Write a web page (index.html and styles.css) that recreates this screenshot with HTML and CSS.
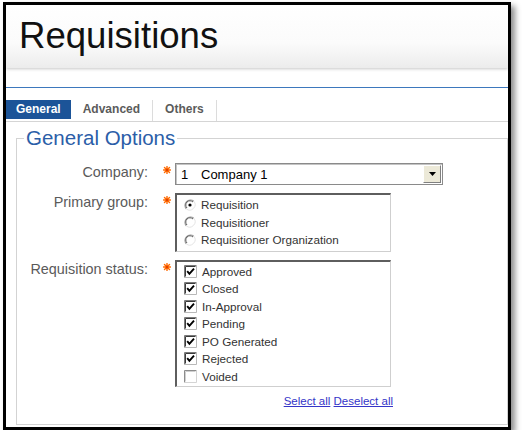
FILE: index.html
```html
<!DOCTYPE html>
<html>
<head>
<meta charset="utf-8">
<link rel="stylesheet" href="styles.css">
</head>
<body>
<div class="frame">
  <header class="page-header"><h1>Requisitions</h1></header>
  <div class="rule"></div>
  <nav class="tabs">
    <span class="tab active">General</span>
    <span class="tab">Advanced</span>
    <span class="tab">Others</span>
  </nav>
  <fieldset class="options">
    <legend>General Options</legend>

    <div class="row">
      <label class="lbl">Company:</label>
      <span class="req"><svg width="8" height="8" viewBox="0 0 8 8"><path d="M4 0.5V7.5M0.5 4H7.5M1.5 1.5L6.5 6.5M6.5 1.5L1.5 6.5" stroke="#ff6a00" stroke-width="1.4" stroke-linecap="round"/><circle cx="4" cy="4" r="1.2" fill="#e04000"/></svg></span>
      <div class="select">
        <span class="code">1</span><span class="value">Company 1</span>
        <span class="drop"><svg width="7" height="4" viewBox="0 0 7 4"><path d="M0 0H7L3.5 4Z" fill="#000"/></svg></span>
      </div>
    </div>

    <div class="row">
      <label class="lbl">Primary group:</label>
      <span class="req"><svg width="8" height="8" viewBox="0 0 8 8"><path d="M4 0.5V7.5M0.5 4H7.5M1.5 1.5L6.5 6.5M6.5 1.5L1.5 6.5" stroke="#ff6a00" stroke-width="1.4" stroke-linecap="round"/><circle cx="4" cy="4" r="1.2" fill="#e04000"/></svg></span>
      <div class="listbox radios">
        <div class="item"><svg class="radio" width="12" height="12" viewBox="0 0 12 12"><path d="M2.2 9.8A5.4 5.4 0 0 1 9.8 2.2" stroke="#9a9a9a" stroke-width="1.1" fill="none"/><path d="M3 9A4.2 4.2 0 0 1 9 3" stroke="#5a5a5a" stroke-width="1" fill="none"/><path d="M2.2 9.8A5.4 5.4 0 0 0 9.8 2.2" stroke="#e4e4e4" stroke-width="1" fill="none"/><circle cx="6" cy="6" r="1.6" fill="#000"/></svg><span>Requisition</span></div>
        <div class="item"><svg class="radio" width="12" height="12" viewBox="0 0 12 12"><path d="M2.2 9.8A5.4 5.4 0 0 1 9.8 2.2" stroke="#9a9a9a" stroke-width="1.1" fill="none"/><path d="M3 9A4.2 4.2 0 0 1 9 3" stroke="#5a5a5a" stroke-width="1" fill="none"/><path d="M2.2 9.8A5.4 5.4 0 0 0 9.8 2.2" stroke="#e4e4e4" stroke-width="1" fill="none"/></svg><span>Requisitioner</span></div>
        <div class="item"><svg class="radio" width="12" height="12" viewBox="0 0 12 12"><path d="M2.2 9.8A5.4 5.4 0 0 1 9.8 2.2" stroke="#9a9a9a" stroke-width="1.1" fill="none"/><path d="M3 9A4.2 4.2 0 0 1 9 3" stroke="#5a5a5a" stroke-width="1" fill="none"/><path d="M2.2 9.8A5.4 5.4 0 0 0 9.8 2.2" stroke="#e4e4e4" stroke-width="1" fill="none"/></svg><span>Requisitioner Organization</span></div>
      </div>
    </div>

    <div class="row">
      <label class="lbl">Requisition status:</label>
      <span class="req"><svg width="8" height="8" viewBox="0 0 8 8"><path d="M4 0.5V7.5M0.5 4H7.5M1.5 1.5L6.5 6.5M6.5 1.5L1.5 6.5" stroke="#ff6a00" stroke-width="1.4" stroke-linecap="round"/><circle cx="4" cy="4" r="1.2" fill="#e04000"/></svg></span>
      <div class="listbox checks">
        <div class="item"><svg class="check" width="13" height="13" viewBox="0 0 13 13"><rect width="13" height="13" fill="#fff"/><path d="M0.5 12.5V0.5H12.5" stroke="#7a7a7a" fill="none"/><path d="M1.5 11.5V1.5H11.5" stroke="#3a3a3a" fill="none"/><path d="M0.5 12.5H12.5V0.5" stroke="#b8b8b8" fill="none"/><path d="M3.2 6.2L5.4 8.8L10 3.6" stroke="#000" stroke-width="1.9" fill="none"/></svg><span>Approved</span></div>
        <div class="item"><svg class="check" width="13" height="13" viewBox="0 0 13 13"><rect width="13" height="13" fill="#fff"/><path d="M0.5 12.5V0.5H12.5" stroke="#7a7a7a" fill="none"/><path d="M1.5 11.5V1.5H11.5" stroke="#3a3a3a" fill="none"/><path d="M0.5 12.5H12.5V0.5" stroke="#b8b8b8" fill="none"/><path d="M3.2 6.2L5.4 8.8L10 3.6" stroke="#000" stroke-width="1.9" fill="none"/></svg><span>Closed</span></div>
        <div class="item"><svg class="check" width="13" height="13" viewBox="0 0 13 13"><rect width="13" height="13" fill="#fff"/><path d="M0.5 12.5V0.5H12.5" stroke="#7a7a7a" fill="none"/><path d="M1.5 11.5V1.5H11.5" stroke="#3a3a3a" fill="none"/><path d="M0.5 12.5H12.5V0.5" stroke="#b8b8b8" fill="none"/><path d="M3.2 6.2L5.4 8.8L10 3.6" stroke="#000" stroke-width="1.9" fill="none"/></svg><span>In-Approval</span></div>
        <div class="item"><svg class="check" width="13" height="13" viewBox="0 0 13 13"><rect width="13" height="13" fill="#fff"/><path d="M0.5 12.5V0.5H12.5" stroke="#7a7a7a" fill="none"/><path d="M1.5 11.5V1.5H11.5" stroke="#3a3a3a" fill="none"/><path d="M0.5 12.5H12.5V0.5" stroke="#b8b8b8" fill="none"/><path d="M3.2 6.2L5.4 8.8L10 3.6" stroke="#000" stroke-width="1.9" fill="none"/></svg><span>Pending</span></div>
        <div class="item"><svg class="check" width="13" height="13" viewBox="0 0 13 13"><rect width="13" height="13" fill="#fff"/><path d="M0.5 12.5V0.5H12.5" stroke="#7a7a7a" fill="none"/><path d="M1.5 11.5V1.5H11.5" stroke="#3a3a3a" fill="none"/><path d="M0.5 12.5H12.5V0.5" stroke="#b8b8b8" fill="none"/><path d="M3.2 6.2L5.4 8.8L10 3.6" stroke="#000" stroke-width="1.9" fill="none"/></svg><span>PO Generated</span></div>
        <div class="item"><svg class="check" width="13" height="13" viewBox="0 0 13 13"><rect width="13" height="13" fill="#fff"/><path d="M0.5 12.5V0.5H12.5" stroke="#7a7a7a" fill="none"/><path d="M1.5 11.5V1.5H11.5" stroke="#3a3a3a" fill="none"/><path d="M0.5 12.5H12.5V0.5" stroke="#b8b8b8" fill="none"/><path d="M3.2 6.2L5.4 8.8L10 3.6" stroke="#000" stroke-width="1.9" fill="none"/></svg><span>Rejected</span></div>
        <div class="item"><svg class="check" width="13" height="13" viewBox="0 0 13 13"><rect width="13" height="13" fill="#fff"/><path d="M0.5 12.5V0.5H12.5" stroke="#8c8c8c" fill="none"/><path d="M1.5 11.5V1.5H11.5" stroke="#d0d0d0" fill="none"/><path d="M0.5 12.5H12.5V0.5" stroke="#d4d4d4" fill="none"/></svg><span>Voided</span></div>
      </div>
    </div>

    <div class="row">
      <span></span><span></span>
      <div class="links"><a href="#">Select all</a> <a href="#">Deselect all</a></div>
    </div>
  </fieldset>
</div>
</body>
</html>
```

FILE: styles.css
```css
html, body {
  margin: 0;
  background: #fff;
  font-family: "Liberation Sans", Arial, sans-serif;
}

.frame {
  margin: 2px 0 0 3px;
  width: 502px;
  height: 422px;
  border: 3px solid #000;
  box-shadow: 4px 4px 6px rgba(0, 0, 0, 0.45);
  display: flex;
  flex-direction: column;
  overflow: hidden;
  background: #fff;
}

.page-header {
  flex: none;
  height: 63px;
  background: linear-gradient(#ffffff 0%, #fbfbfb 60%, #ececec 100%);
  box-shadow: 0 1px 3px rgba(0, 0, 0, 0.22);
}

.page-header h1 {
  margin: 0;
  padding: 10px 0 0 13px;
  font-weight: normal;
  font-size: 36.6px;
  line-height: 42px;
  color: #111;
}

.rule {
  flex: none;
  height: 1px;
  margin-top: 19px;
  background: #3d78bd;
}

.tabs {
  flex: none;
  display: flex;
  margin-top: 12px;
  height: 21px;
  border-bottom: 1px solid #d5d5d5;
}

.tab {
  padding: 0 12px;
  border-right: 1px solid #dcdcdc;
  font-weight: bold;
  font-size: 12px;
  line-height: 19px;
  color: #5b5b5b;
}

.tab.active {
  padding: 0 10px;
  height: 19px;
  border-right: none;
  background: #1c5498;
  color: #fff;
}

.options {
  flex: 1;
  min-width: 0;
  margin: 5px 0 2px 10px;
  padding: 14px 0 0 0;
  border: 1px solid #d3d3d3;
}

.options legend {
  margin-left: 7px;
  padding: 0 2px;
  font-size: 20.5px;
  line-height: 22px;
  color: #2b5ea8;
}

.row {
  display: grid;
  grid-template-columns: 133px 25px auto;
  align-items: start;
  margin-bottom: 8px;
}

.lbl {
  text-align: right;
  padding: 1px 2px 0 0;
  font-size: 14.4px;
  line-height: 17px;
  color: #5a5a5a;
}

.req {
  padding: 3px 0 0 13px;
}

.req svg {
  display: block;
}

.select {
  width: 268px;
  height: 22px;
  box-sizing: border-box;
  border: 1px solid #8a8a8a;
  box-shadow: inset 1px 1px 0 #c4c4c4;
  display: flex;
  align-items: center;
  font-size: 13px;
  color: #000;
}

.select .code {
  margin-left: 5px;
  width: 20px;
}

.select .value {
  flex: 1;
}

.drop {
  width: 18px;
  height: 18px;
  margin-right: 1px;
  box-sizing: border-box;
  background: #ece9d8;
  border: 1px solid;
  border-color: #fff #808080 #808080 #fff;
  display: flex;
  align-items: center;
  justify-content: center;
}

.drop svg {
  display: block;
}

.listbox {
  width: 216px;
  box-sizing: border-box;
  border-style: solid;
  border-width: 2px 1px 1px 2px;
  border-color: #5e5e5e #cfcfcf #cfcfcf #5e5e5e;
}

.radios {
  padding: 1px 0 2px 7px;
}

.checks {
  padding: 1px 0 1px 7px;
}

.item {
  display: flex;
  align-items: center;
  height: 17.5px;
  font-size: 11.7px;
  color: #333;
}

.item svg {
  display: block;
  flex: none;
}

.item .radio + span {
  margin-left: 5px;
}

.item .check + span {
  margin-left: 5px;
}

.links {
  width: 218px;
  text-align: right;
  font-size: 11.5px;
  line-height: 13px;
}

.links a {
  color: #3535c8;
  text-decoration: underline;
}
```
